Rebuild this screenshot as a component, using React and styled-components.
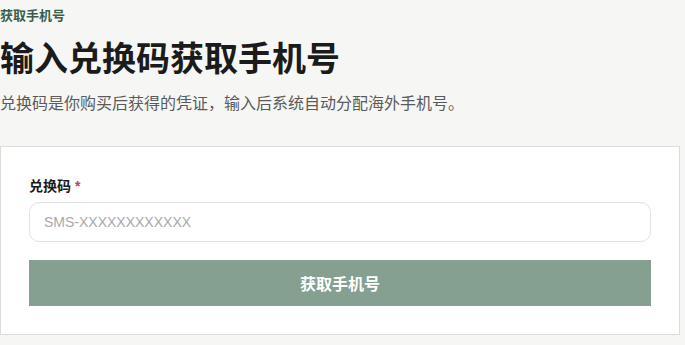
import React from "react";
import styled, { createGlobalStyle } from "styled-components";

const Global = createGlobalStyle`
  html, body { margin: 0; padding: 0; background: #f6f6f4; }
  body { font-family: "Liberation Sans", "Noto Sans CJK SC", sans-serif; }
  * { box-sizing: border-box; }
`;

const Page = styled.div`
  width: 685px;
  height: 345px;
  overflow: hidden;
  background: #f6f6f4;
  padding-top: 6px;
`;

const Overline = styled.div`
  font-size: 13px;
  font-weight: 700;
  line-height: 20px;
  color: #3b5d4a;
`;

const Title = styled.h1`
  margin: 11px 0 0;
  font-size: 34px;
  font-weight: 700;
  line-height: 44px;
  color: #1b1b1b;
`;

const Subtitle = styled.p`
  margin: 12px 0 0;
  font-size: 16px;
  line-height: 22px;
  color: #5b5b5b;
`;

const Card = styled.div`
  margin-top: 31px;
  width: 680px;
  background: #fff;
  border: 1px solid #dcdcd8;
  padding: 28px;
  display: flex;
  flex-direction: column;
`;

const Label = styled.label`
  font-size: 14px;
  font-weight: 700;
  line-height: 22px;
  color: #1a1a1a;
`;

const Required = styled.span`
  color: #b4455a;
  margin-left: 4px;
`;

const Input = styled.input`
  margin-top: 5px;
  height: 40px;
  border: 1px solid #e2e2e2;
  border-radius: 10px;
  padding: 0 14px;
  font-family: "Liberation Sans", "Noto Sans CJK SC", sans-serif;
  font-size: 14px;
  color: #333;
  outline: none;
  background: #fff;
  &::placeholder { color: #a9a9a9; }
`;

const Button = styled.button`
  margin-top: 18px;
  height: 46px;
  border: none;
  border-radius: 0;
  background: #85a091;
  color: #fff;
  font-family: "Liberation Sans", "Noto Sans CJK SC", sans-serif;
  font-size: 16px;
  font-weight: 700;
  cursor: pointer;
`;

export default function App() {
  return (
    <>
      <Global />
      <Page>
        <Overline>获取手机号</Overline>
        <Title>输入兑换码获取手机号</Title>
        <Subtitle>兑换码是你购买后获得的凭证，输入后系统自动分配海外手机号。</Subtitle>
        <Card>
          <Label>
            兑换码<Required>*</Required>
          </Label>
          <Input placeholder="SMS-XXXXXXXXXXXX" />
          <Button>获取手机号</Button>
        </Card>
      </Page>
    </>
  );
}
